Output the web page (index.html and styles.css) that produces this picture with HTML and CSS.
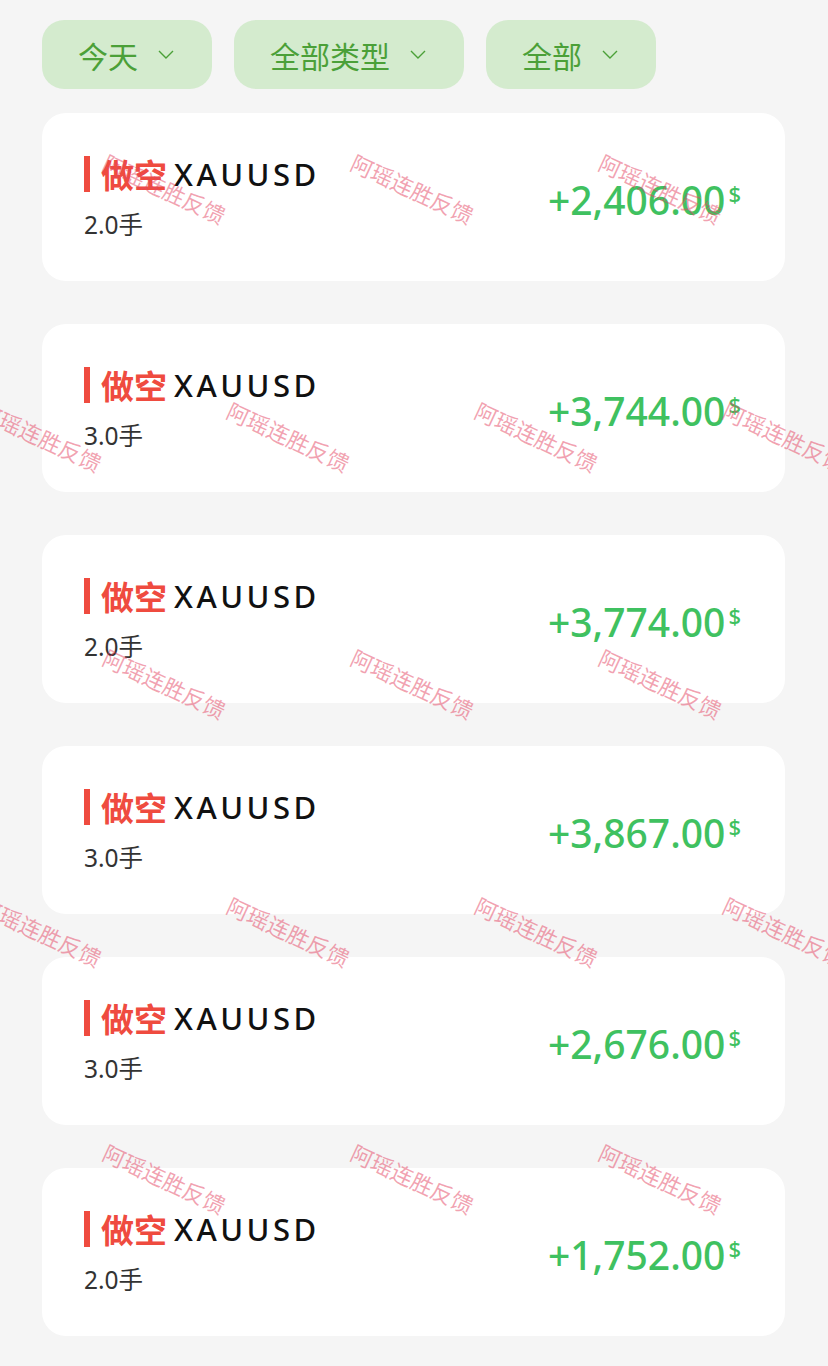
FILE: index.html
```html
<!DOCTYPE html>
<html>
<head lang="zh">
    <meta charset="UTF-8">
    <title>订单</title>
    <link rel="stylesheet" href="styles.css">
</head>
<body>
<div class="page">
    <div class="filters">
        <div class="pill">今天<svg class="chev" viewBox="0 0 16 9"><polyline points="1,1 8,8 15,1"/></svg></div>
        <div class="pill">全部类型<svg class="chev" viewBox="0 0 16 9"><polyline points="1,1 8,8 15,1"/></svg></div>
        <div class="pill">全部<svg class="chev" viewBox="0 0 16 9"><polyline points="1,1 8,8 15,1"/></svg></div>
    </div>

    <div class="list">
        <div class="card">
            <div class="info">
                <div class="title"><span class="bar"></span><span class="side">做空</span><span class="sym">XAUUSD</span></div>
                <div class="lots">2.0手</div>
            </div>
            <div class="amount">+2,406.00<span class="cur">$</span></div>
        </div>
        <div class="card">
            <div class="info">
                <div class="title"><span class="bar"></span><span class="side">做空</span><span class="sym">XAUUSD</span></div>
                <div class="lots">3.0手</div>
            </div>
            <div class="amount">+3,744.00<span class="cur">$</span></div>
        </div>
        <div class="card">
            <div class="info">
                <div class="title"><span class="bar"></span><span class="side">做空</span><span class="sym">XAUUSD</span></div>
                <div class="lots">2.0手</div>
            </div>
            <div class="amount">+3,774.00<span class="cur">$</span></div>
        </div>
        <div class="card">
            <div class="info">
                <div class="title"><span class="bar"></span><span class="side">做空</span><span class="sym">XAUUSD</span></div>
                <div class="lots">3.0手</div>
            </div>
            <div class="amount">+3,867.00<span class="cur">$</span></div>
        </div>
        <div class="card">
            <div class="info">
                <div class="title"><span class="bar"></span><span class="side">做空</span><span class="sym">XAUUSD</span></div>
                <div class="lots">3.0手</div>
            </div>
            <div class="amount">+2,676.00<span class="cur">$</span></div>
        </div>
        <div class="card">
            <div class="info">
                <div class="title"><span class="bar"></span><span class="side">做空</span><span class="sym">XAUUSD</span></div>
                <div class="lots">2.0手</div>
            </div>
            <div class="amount">+1,752.00<span class="cur">$</span></div>
        </div>
    </div>
</div>

<!-- 水印层 -->
<div class="watermark">
    <div class="wm-row"><span>阿瑶连胜反馈</span><span>阿瑶连胜反馈</span><span>阿瑶连胜反馈</span></div>
    <div class="wm-row shift"><span>阿瑶连胜反馈</span><span>阿瑶连胜反馈</span><span>阿瑶连胜反馈</span><span>阿瑶连胜反馈</span></div>
    <div class="wm-row"><span>阿瑶连胜反馈</span><span>阿瑶连胜反馈</span><span>阿瑶连胜反馈</span></div>
    <div class="wm-row shift"><span>阿瑶连胜反馈</span><span>阿瑶连胜反馈</span><span>阿瑶连胜反馈</span><span>阿瑶连胜反馈</span></div>
    <div class="wm-row"><span>阿瑶连胜反馈</span><span>阿瑶连胜反馈</span><span>阿瑶连胜反馈</span></div>
</div>
</body>
</html>
```

FILE: styles.css
```css
* {
    padding: 0;
    margin: 0;
    box-sizing: border-box;
}

body {
    background: #f5f5f5;
    font-family: "Noto Sans", "Noto Sans CJK SC", sans-serif;
    width: 828px;
    height: 1366px;
    overflow: hidden;
    position: relative;
}

.page {
    padding: 20px 43px 0 42px;
}

.filters {
    display: flex;
    gap: 22px;
    margin-bottom: 24px;
}

.pill {
    height: 69px;
    padding: 0 38px 0 36px;
    display: flex;
    align-items: center;
    gap: 20px;
    background: #d4ebce;
    border-radius: 22px;
    color: #4ba038;
    font-size: 30px;
    font-family: "Noto Sans CJK SC", sans-serif;
}

.chev {
    width: 16px;
    height: 9px;
    fill: none;
    stroke: #4ba038;
    stroke-width: 1.4;
}

.list {
    display: flex;
    flex-direction: column;
    gap: 43px;
}

.card {
    height: 168px;
    background: #fff;
    border-radius: 24px;
    padding: 0 44px 0 42px;
    display: flex;
    align-items: center;
    justify-content: space-between;
}

.title {
    display: flex;
    align-items: center;
    height: 36px;
}

.bar {
    width: 6px;
    height: 36px;
    background: #ef4b3f;
    margin-right: 11px;
}

.side {
    color: #ef4b3f;
    font-family: "Noto Sans CJK SC", sans-serif;
    font-weight: bold;
    font-size: 33px;
    margin-right: 7px;
}

.sym {
    color: #111;
    font-size: 31px;
    font-weight: 500;
    letter-spacing: 3.5px;
}

.lots {
    margin-top: 19px;
    line-height: 28px;
    font-size: 24.5px;
    color: #333;
}

.amount {
    display: flex;
    align-items: flex-start;
    color: #3fc160;
    font-size: 39px;
    font-weight: 500;
    line-height: 44px;
    margin-top: 6px;
}

.cur {
    font-size: 22px;
    line-height: 30px;
    margin-left: 3px;
}

.watermark {
    position: absolute;
    left: 0;
    top: 64px;
    width: 828px;
    height: 1302px;
    overflow: hidden;
    pointer-events: none;
}

.wm-row {
    display: flex;
    height: 247.5px;
    margin-left: 41px;
}

.wm-row.shift {
    margin-left: -83px;
}

.wm-row span {
    flex: 0 0 248px;
    display: flex;
    align-items: center;
    justify-content: center;
    font-family: "Noto Sans CJK SC", sans-serif;
    font-size: 22px;
    color: rgba(228, 70, 100, 0.5);
    transform: rotate(25deg);
}
```
